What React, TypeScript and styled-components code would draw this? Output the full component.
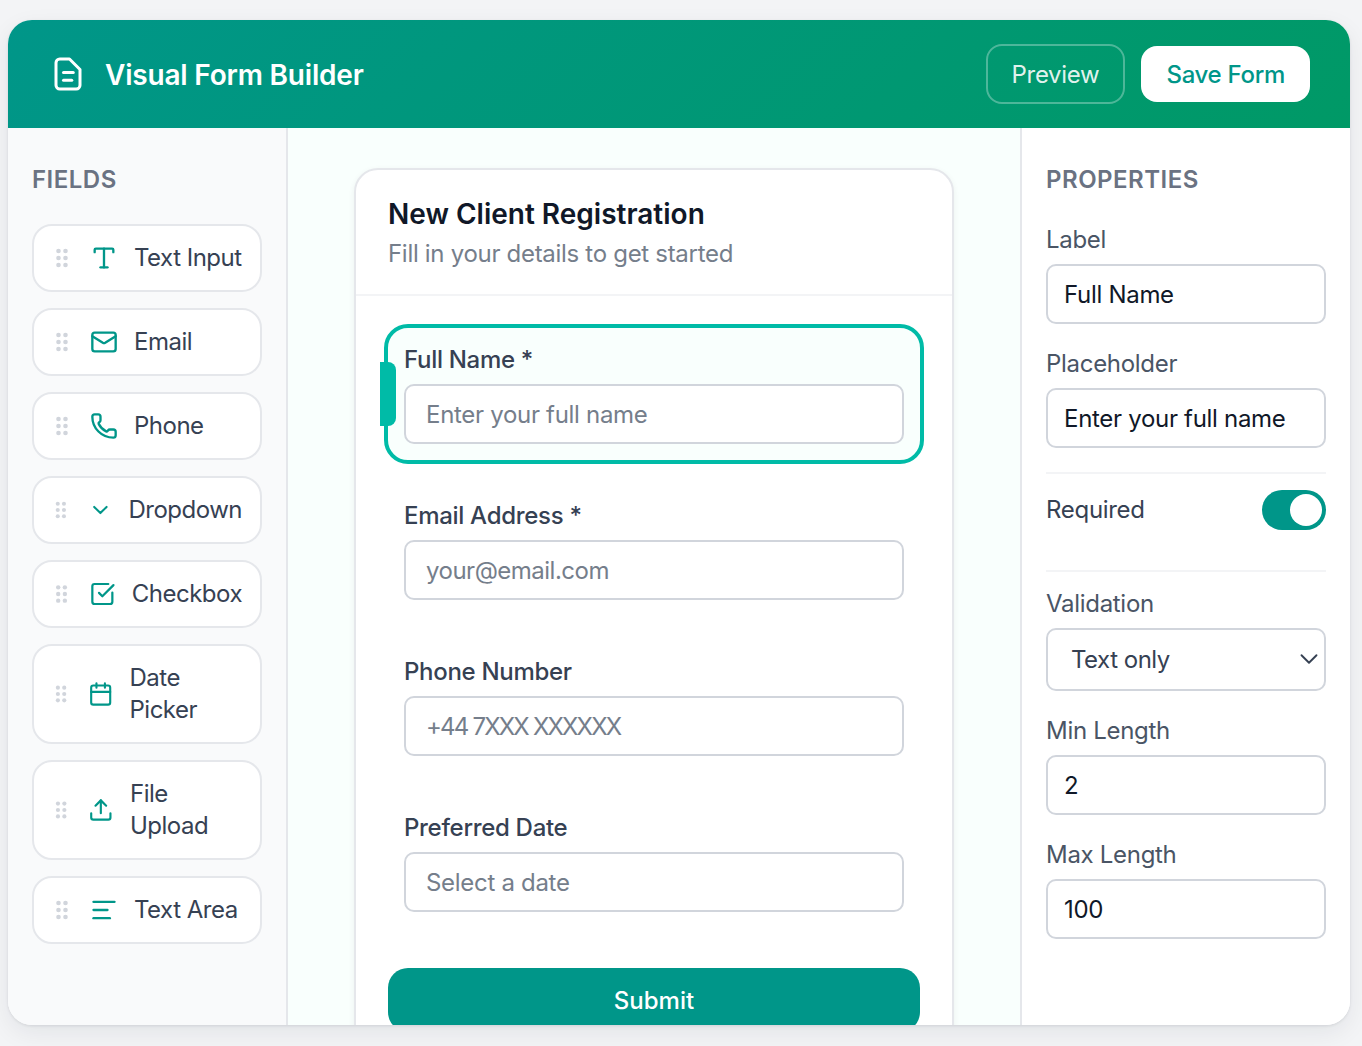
import React from 'react';
import styled, { createGlobalStyle } from 'styled-components';
import { AlignLeft, Calendar, ChevronDown, Mail, Phone, SquareCheckBig, Type, Upload } from 'lucide-react';

const GlobalStyle = createGlobalStyle`
  * {
    box-sizing: border-box;
  }

  body {
    margin: 0;
    background: #f3f4f6;
    font-family: Inter, "Liberation Sans", sans-serif;
    letter-spacing: -0.3px;
    color: #364153;
  }
`;

const Shell = styled.div`
  width: 1342px;
  height: 1005px;
  margin: 20px 0 21px 8px;
  display: flex;
  flex-direction: column;
  background: #fff;
  border-radius: 24px;
  overflow: hidden;
  box-shadow: 0 1px 3px rgba(16, 24, 40, 0.1), 0 8px 24px rgba(16, 24, 40, 0.07);
`;

const Header = styled.header`
  height: 108px;
  flex: none;
  padding: 0 40px 0 42px;
  display: flex;
  align-items: center;
  justify-content: space-between;
  background: linear-gradient(135deg, #009689, #009966);
  color: #fff;
`;

const Brand = styled.div`
  display: flex;
  align-items: center;
  gap: 19px;
`;

const BrandTitle = styled.h1`
  margin: 2px 0 0;
  font-size: 28px;
  font-weight: 600;
  letter-spacing: -0.2px;
`;

const HeaderActions = styled.div`
  display: flex;
  align-items: center;
  gap: 16px;
`;

const HeaderButton = styled.button<{ $primary?: boolean }>`
  height: ${(p) => (p.$primary ? '56px' : '60px')};
  padding: 0 ${(p) => (p.$primary ? '25px' : '24px')};
  border: ${(p) => (p.$primary ? 'none' : '2px solid rgba(255, 255, 255, 0.3)')};
  border-radius: 16px;
  background: ${(p) => (p.$primary ? '#fff' : 'transparent')};
  color: ${(p) => (p.$primary ? '#009689' : 'rgba(255, 255, 255, 0.9)')};
  font-family: inherit;
  font-size: 24px;
  letter-spacing: -0.3px;
  font-weight: ${(p) => (p.$primary ? 500 : 400)};
`;

const Body = styled.div`
  flex: 1;
  min-height: 0;
  display: flex;
`;

const Sidebar = styled.aside`
  width: 280px;
  flex: none;
  padding: 36px 24px 0;
  background: #f9fafb;
  border-right: 2px solid #e5e7eb;
`;

const SectionTitle = styled.h2`
  margin: 0 0 30px;
  padding-top: 1px;
  font-size: 24px;
  line-height: 29px;
  font-weight: 600;
  letter-spacing: 0.5px;
  color: #6a7282;
`;

const FieldList = styled.div`
  display: flex;
  flex-direction: column;
  gap: 16px;
`;

const FieldItem = styled.div`
  min-height: 68px;
  padding: 16px 18px;
  display: flex;
  align-items: center;
  gap: 18px;
  background: #fff;
  border: 2px solid #e5e7eb;
  border-radius: 20px;
  font-size: 24px;
  line-height: 32px;
  letter-spacing: -0.5px;

  & > svg {
    min-width: 0;
    color: #009689;
  }
`;

const FieldName = styled.span`
  margin-left: -2px;
`;

const Canvas = styled.main`
  flex: 1;
  min-width: 0;
  padding-top: 40px;
  display: flex;
  justify-content: center;
  background: #f9fffd;
`;

const Card = styled.section`
  width: 600px;
  height: 940px;
  flex: none;
  background: #fff;
  border: 2px solid #e5e7eb;
  border-radius: 24px;
  box-shadow: 0 2px 6px rgba(16, 24, 40, 0.06);
`;

const CardHeader = styled.div`
  height: 126px;
  padding: 26px 32px 0;
  border-bottom: 2px solid #f3f4f6;
`;

const CardTitle = styled.h2`
  margin: 0 0 4px;
  font-size: 28px;
  line-height: 36px;
  font-weight: 600;
  letter-spacing: 0;
  color: #101828;
`;

const CardSubtitle = styled.p`
  margin: 0;
  font-size: 24px;
  line-height: 36px;
  color: #757e8b;
`;

const Form = styled.form`
  padding: 28px 28px 0;
  display: flex;
  flex-direction: column;
  gap: 16px;
`;

const FormField = styled.div<{ $selected?: boolean }>`
  position: relative;
  padding: 16px;
  border: 4px solid ${(p) => (p.$selected ? '#00bba7' : 'transparent')};
  border-radius: 24px;
  background: ${(p) => (p.$selected ? '#f9fffd' : 'transparent')};
`;

const SelectedHandle = styled.span`
  position: absolute;
  left: -8px;
  top: 34px;
  width: 16px;
  height: 64px;
  background: #00bba7;
  border-radius: 0 8px 8px 0;
`;

const FieldLabel = styled.label`
  display: block;
  margin-bottom: 8px;
  font-size: 24px;
  line-height: 32px;
  font-weight: 500;
  color: #364153;
`;

const TextBox = styled.input<{ $compact?: boolean; $tracking?: number }>`
  display: block;
  width: 100%;
  height: 60px;
  padding: 0 ${(p) => (p.$compact ? '16px' : '20px')};
  background: #fff;
  border: 2px solid #d1d5dc;
  border-radius: 10px;
  outline: none;
  font-family: inherit;
  font-size: 24px;
  letter-spacing: ${(p) => p.$tracking ?? -0.3}px;
  color: #101828;

  &::placeholder {
    color: #757e8b;
    opacity: 1;
  }
`;

const SubmitButton = styled.button`
  height: 64px;
  margin: 20px 4px 0;
  flex: none;
  border: none;
  border-radius: 20px;
  background: #009689;
  color: #fff;
  font-family: inherit;
  font-size: 24px;
  font-weight: 500;
`;

const Properties = styled.aside`
  width: 330px;
  flex: none;
  padding: 36px 24px 0;
  background: #fff;
  border-left: 2px solid #e5e7eb;
`;

const PropTitle = styled(SectionTitle)`
  margin-bottom: 30px;
`;

const PropGroup = styled.div<{ $first?: boolean }>`
  margin-top: ${(p) => (p.$first ? '16px' : '0')};
  margin-bottom: 24px;
`;

const PropLabel = styled.label`
  display: block;
  margin-bottom: 8px;
  font-size: 24px;
  line-height: 32px;
  color: #4a5565;
`;

const Divider = styled.hr`
  margin: 0;
  border: none;
  border-top: 2px solid #f3f4f6;
`;

const ToggleRow = styled.div`
  height: 96px;
  padding-top: 16px;
  display: flex;
  justify-content: space-between;
  align-items: flex-start;
  font-size: 24px;
  line-height: 40px;
  color: #364153;
`;

const Toggle = styled.span`
  width: 64px;
  height: 40px;
  padding: 4px;
  display: flex;
  justify-content: flex-end;
  background: #009689;
  border-radius: 20px;
`;

const ToggleKnob = styled.span`
  width: 32px;
  height: 32px;
  background: #fff;
  border-radius: 50%;
`;

const SelectWrap = styled.div`
  position: relative;
  color: #364153;

  & > svg {
    position: absolute;
    right: 2px;
    top: 16px;
    pointer-events: none;
  }
`;

const SelectBox = styled.select`
  display: block;
  width: 100%;
  height: 63px;
  padding: 0 23px;
  appearance: none;
  background: #fff;
  border: 2px solid #d1d5dc;
  border-radius: 10px;
  font-family: inherit;
  font-size: 24px;
  letter-spacing: -0.5px;
  color: #364153;
`;

const fieldTypes = [
  { name: 'Text Input', icon: Type },
  { name: 'Email', icon: Mail },
  { name: 'Phone', icon: Phone },
  { name: 'Dropdown', icon: ChevronDown },
  { name: 'Checkbox', icon: SquareCheckBig },
  { name: 'Date Picker', icon: Calendar },
  { name: 'File Upload', icon: Upload },
  { name: 'Text Area', icon: AlignLeft },
];

const formFields = [
  { label: 'Full Name *', placeholder: 'Enter your full name', selected: true },
  { label: 'Email Address *', placeholder: 'your@email.com', tracking: -0.5 },
  { label: 'Phone Number', placeholder: '+44 7XXX XXXXXX', tracking: -1.8 },
  { label: 'Preferred Date', placeholder: 'Select a date' },
];

const GripDots = () => (
  <svg width="20" height="20" viewBox="0 0 20 20" fill="#d1d5dc" style={{ flexShrink: 1 }}>
    {[3, 10, 17].map((cy) => (
      <React.Fragment key={cy}>
        <circle cx="6.5" cy={cy} r="2.3" />
        <circle cx="13.5" cy={cy} r="2.3" />
      </React.Fragment>
    ))}
  </svg>
);

const BrandIcon = () => (
  <svg width="36" height="36" viewBox="0 0 24 24" fill="none" stroke="#fff" strokeWidth="2" strokeLinecap="round" strokeLinejoin="round">
    <path d="M13 2H6.5A2.5 2.5 0 0 0 4 4.5v15A2.5 2.5 0 0 0 6.5 22h11a2.5 2.5 0 0 0 2.5-2.5V9Z" />
    <path d="M9 11h6.5" />
    <path d="M9 16.2h5.5" />
  </svg>
);

const App = () => {
  return (
    <>
      <GlobalStyle />
      <Shell>
        <Header>
          <Brand>
            <BrandIcon />
            <BrandTitle>Visual Form Builder</BrandTitle>
          </Brand>
          <HeaderActions>
            <HeaderButton>Preview</HeaderButton>
            <HeaderButton $primary>Save Form</HeaderButton>
          </HeaderActions>
        </Header>
        <Body>
          <Sidebar>
            <SectionTitle>FIELDS</SectionTitle>
            <FieldList>
              {fieldTypes.map(({ name, icon: Icon }) => (
                <FieldItem key={name}>
                  <GripDots />
                  <Icon size={28} strokeWidth={2} />
                  <FieldName>{name}</FieldName>
                </FieldItem>
              ))}
            </FieldList>
          </Sidebar>
          <Canvas>
            <Card>
              <CardHeader>
                <CardTitle>New Client Registration</CardTitle>
                <CardSubtitle>Fill in your details to get started</CardSubtitle>
              </CardHeader>
              <Form>
                {formFields.map((field) => (
                  <FormField key={field.label} $selected={field.selected}>
                    {field.selected && <SelectedHandle />}
                    <FieldLabel>{field.label}</FieldLabel>
                    <TextBox placeholder={field.placeholder} $tracking={field.tracking} readOnly />
                  </FormField>
                ))}
                <SubmitButton type="button">Submit</SubmitButton>
              </Form>
            </Card>
          </Canvas>
          <Properties>
            <PropTitle>PROPERTIES</PropTitle>
            <PropGroup>
              <PropLabel>Label</PropLabel>
              <TextBox $compact value="Full Name" readOnly />
            </PropGroup>
            <PropGroup>
              <PropLabel>Placeholder</PropLabel>
              <TextBox $compact value="Enter your full name" readOnly />
            </PropGroup>
            <Divider />
            <ToggleRow>
              Required
              <Toggle>
                <ToggleKnob />
              </Toggle>
            </ToggleRow>
            <Divider />
            <PropGroup $first>
              <PropLabel>Validation</PropLabel>
              <SelectWrap>
                <SelectBox defaultValue="Text only">
                  <option>Text only</option>
                </SelectBox>
                <ChevronDown size={30} strokeWidth={1.5} />
              </SelectWrap>
            </PropGroup>
            <PropGroup>
              <PropLabel>Min Length</PropLabel>
              <TextBox $compact value="2" readOnly />
            </PropGroup>
            <PropGroup>
              <PropLabel>Max Length</PropLabel>
              <TextBox $compact value="100" readOnly />
            </PropGroup>
          </Properties>
        </Body>
      </Shell>
    </>
  );
};

export default App;
